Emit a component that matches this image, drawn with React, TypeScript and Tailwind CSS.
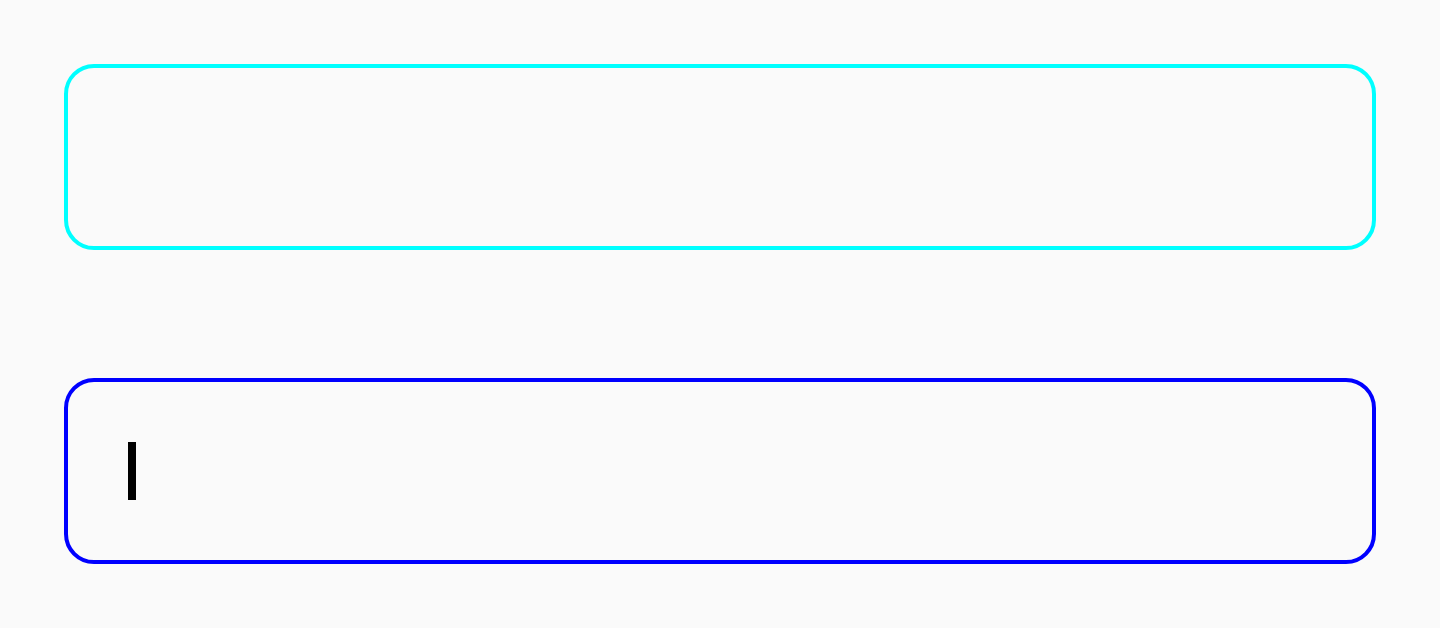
export default function App() {
  return (
    <div className="flex min-h-[628px] w-full flex-col gap-[128px] bg-[#fafafa] p-16">
      <div className="h-[186px] w-full rounded-[30px] border-4 border-[#00ffff]" />
      <div className="flex h-[186px] w-full items-center rounded-[30px] border-4 border-[#0000ff] px-[60px]">
        <div className="h-[58px] w-2 bg-black" />
      </div>
    </div>
  );
}
